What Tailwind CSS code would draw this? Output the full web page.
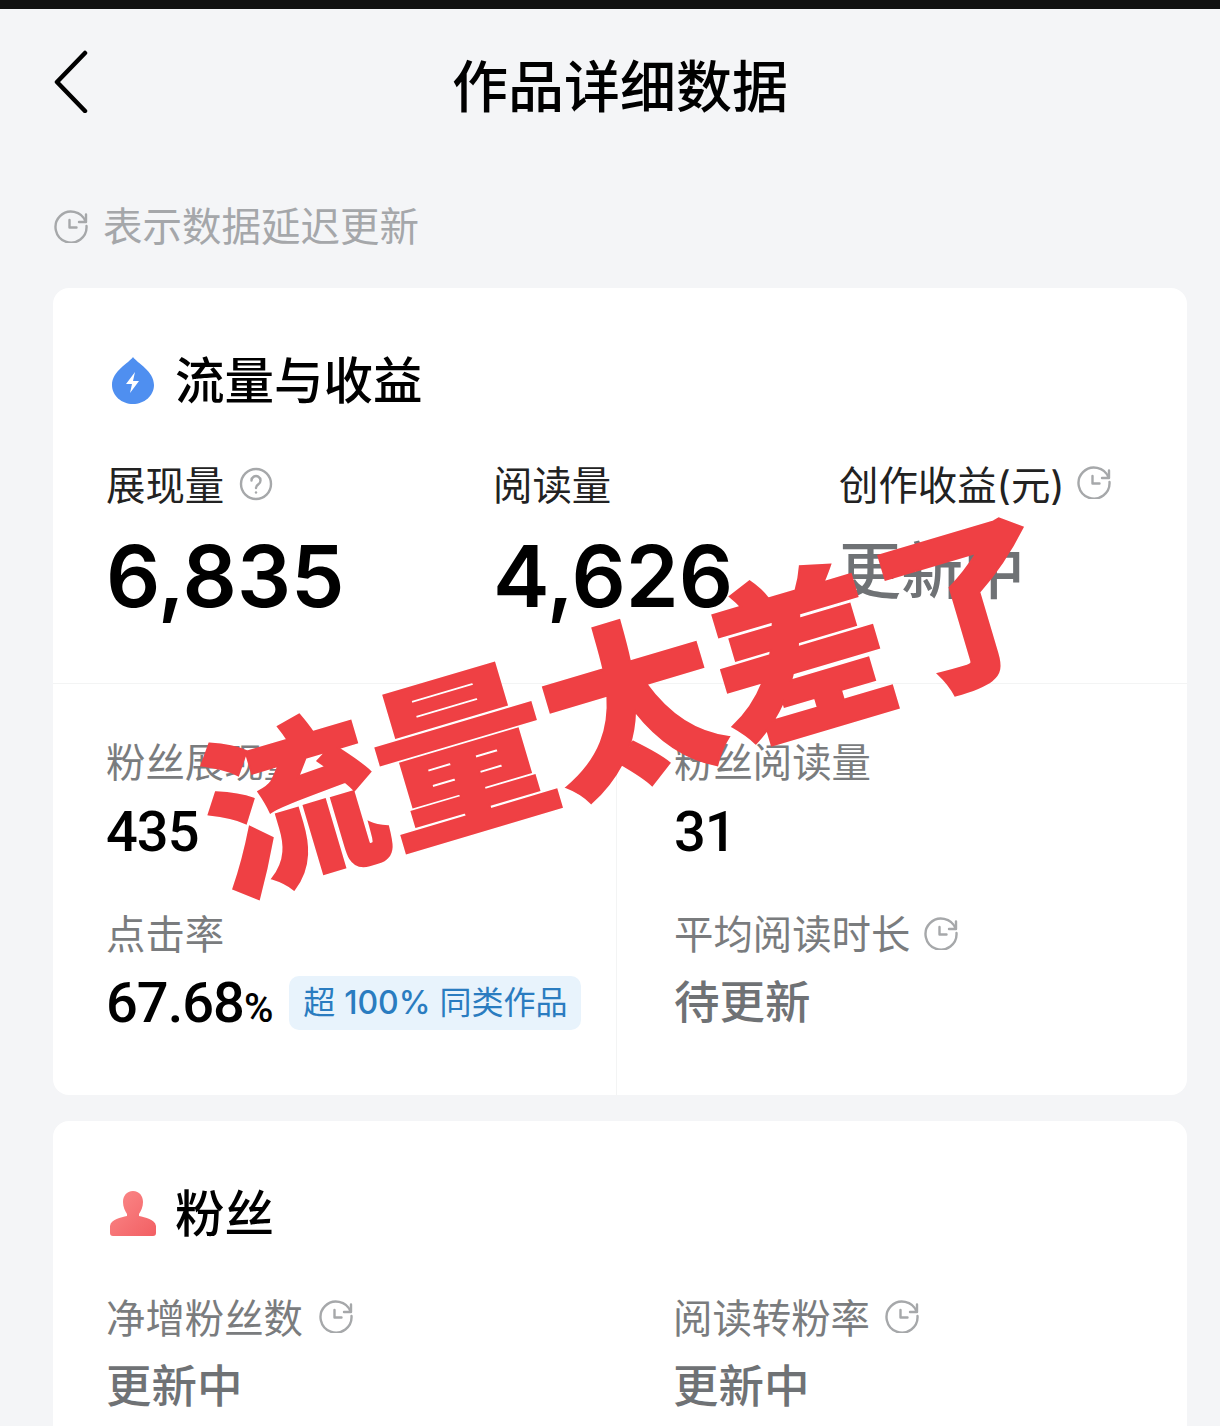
<!DOCTYPE html>
<html lang="zh-CN">
<head>
    <meta charset="UTF-8">
    <title>作品详细数据</title>
    <script src="https://cdn.jsdelivr.net/npm/@tailwindcss/browser@4"></script>
</head>
<body class="relative w-[1220px] h-[1426px] overflow-hidden bg-[#f4f5f7] font-['Inter','Noto_Sans_CJK_SC',sans-serif] text-black">
    <svg class="hidden">
        <symbol id="clock" viewBox="0 0 34 34" fill="none" stroke="#a6a8aa" stroke-width="2.4" stroke-linecap="round" stroke-linejoin="round">
            <path d="M31.5 12.5A15.5 15.5 0 1 0 32.5 17"/>
            <path d="M32 5.5v7.5h-7"/>
            <path d="M15.5 11v7.5h7"/>
        </symbol>
    </svg>

    <div class="h-[9px] bg-[#111111]"></div>

    <!-- 顶部标题 -->
    <header class="relative h-[154px] flex items-center justify-center pl-[53px] pr-[33px]">
        <svg class="absolute left-[53px] top-[41px] w-[37px] h-[63px]" viewBox="0 0 37 63" fill="none" stroke="#000" stroke-width="4.5" stroke-linecap="round" stroke-linejoin="round">
            <path d="M32 3 4 32l28 29"/>
        </svg>
        <h1 class="text-[56px] leading-[64px] font-medium pt-[2px]">作品详细数据</h1>
    </header>

    <div class="mt-[43px] ml-[54px] h-[40px] flex items-center gap-[15px] text-[39.5px] leading-[40px] text-[#a5a7aa]">
        <svg class="w-[34px] h-[34px]"><use href="#clock"/></svg>
        <span class="pt-[2px]">表示数据延迟更新</span>
    </div>

    <div class="ml-[53px] mr-[33px] mt-[42px] flex flex-col gap-[26px]">
        <!-- 流量与收益 -->
        <section class="bg-white rounded-[16px] h-[807px] flex flex-col">
            <div class="h-[396px] border-b border-[#f3f4f4] pt-[69px]">
                <div class="h-[48px] flex items-center pl-[57px] gap-[19px]">
                    <svg class="w-[46px] h-[48px]" viewBox="0 0 46 48">
                        <path d="M23 0C27 6 44 14 44 28 44 39 34 47 23 47 12 47 2 39 2 28 2 14 19 6 23 0Z" fill="#4f8ff0"/>
                        <path d="M25 15 16 27h6l-2 9 9-12h-6z" fill="#fff"/>
                    </svg>
                    <h2 class="text-[49.500px] leading-[48px] font-medium">流量与收益</h2>
                </div>
                <div class="mt-[61px] flex pl-[53px]">
                    <div class="w-[387px]">
                        <div class="h-[40px] flex items-center gap-[15px] text-[39.400px] leading-[40px] text-[#222]">
                            <span>展现量</span>
                            <svg class="w-[34px] h-[34px] -mt-[4px]" viewBox="0 0 34 34" fill="none" stroke="#a6a8aa" stroke-width="2.4" stroke-linecap="round">
                                <circle cx="17" cy="17" r="15"/>
                                <path d="M12.5 13.5a4.5 4.5 0 1 1 6.8 3.9c-1.500.9-2.300 1.800-2.300 3.600"/>
                                <path d="M17 25.500v.1"/>
                            </svg>
                        </div>
                        <div class="mt-[29px] h-[84px] text-[85px] leading-[84px] font-semibold">6,835</div>
                    </div>
                    <div class="w-[346px]">
                        <div class="h-[40px] text-[39.400px] leading-[40px] text-[#222]">阅读量</div>
                        <div class="mt-[29px] h-[84px] text-[85px] leading-[84px] font-semibold">4,626</div>
                    </div>
                    <div>
                        <div class="h-[40px] flex items-center gap-[12px] text-[39.400px] leading-[40px] text-[#222]">
                            <span>创作收益(元)</span>
                            <svg class="w-[34px] h-[34px] -mt-[8px]"><use href="#clock"/></svg>
                        </div>
                        <div class="mt-[36px] h-[60px] text-[62px] leading-[60px] font-medium text-[#6f7275]">更新中</div>
                    </div>
                </div>
            </div>
            <div class="flex-1 grid grid-cols-[564px_1fr]">
                <div class="border-r border-[#f3f4f4] pl-[53px] pt-[59px]">
                    <div class="h-[40px] text-[39.400px] leading-[40px] text-[#7a7c7e]">粉丝展现量</div>
                    <div class="mt-[21px] h-[56px] font-['Roboto',sans-serif] text-[56px] leading-[56px] font-medium tracking-[-1px]">435</div>
                    <div class="mt-[55px] h-[40px] text-[39.400px] leading-[40px] text-[#7a7c7e]">点击率</div>
                    <div class="mt-[21px] h-[54px] flex items-center">
                        <span class="pt-[5px] font-['Roboto',sans-serif] text-[56px] leading-[56px] font-medium tracking-[-1px]">67.68<span class="text-[40px]">%</span></span>
                        <span class="ml-[17px] h-[54px] w-[292px] rounded-[10px] bg-[#e8f3fc] flex items-center justify-center text-[32px] text-[#2a7cc0]">超&nbsp;<span class="font-medium">100%</span>&nbsp;同类作品</span>
                    </div>
                </div>
                <div class="pl-[57px] pt-[59px]">
                    <div class="h-[40px] text-[39.400px] leading-[40px] text-[#7a7c7e]">粉丝阅读量</div>
                    <div class="mt-[21px] h-[56px] font-['Roboto',sans-serif] text-[56px] leading-[56px] font-medium tracking-[-1px]">31</div>
                    <div class="mt-[55px] h-[40px] flex items-center gap-[14px] text-[39.400px] leading-[40px] text-[#7a7c7e]">
                        <span>平均阅读时长</span>
                        <svg class="w-[34px] h-[34px] -mt-[4px]"><use href="#clock"/></svg>
                    </div>
                    <div class="mt-[21px] h-[54px] text-[45.500px] leading-[54px] font-medium text-[#6f7275]">待更新</div>
                </div>
            </div>
        </section>

        <!-- 粉丝 -->
        <section class="bg-white rounded-[16px] h-[340px] pt-[69px]">
            <div class="h-[48px] flex items-center pl-[56px] gap-[18px]">
                <svg class="w-[48px] h-[48px]" viewBox="0 0 48 48">
                    <defs>
                        <linearGradient id="fans" x1="0" y1="0" x2="1" y2="1">
                            <stop offset="0" stop-color="#fb8a8a"/>
                            <stop offset="1" stop-color="#f25f63"/>
                        </linearGradient>
                    </defs>
                    <path d="M24 1c6.500 0 10 5 10 11 0 5-2 9-4 12v2c6 1.500 16 3 17 10v7c0 2-1 3-3 3H4c-2 0-3-1-3-3v-7c1-7 11-8.500 17-10v-2c-2-3-4-7-4-12 0-6 3.500-11 10-11Z" fill="url(#fans)"/>
                </svg>
                <h2 class="text-[49.500px] leading-[48px] font-medium">粉丝</h2>
            </div>
            <div class="mt-[61px] grid grid-cols-[564px_1fr]">
                <div class="pl-[53px]">
                    <div class="h-[40px] flex items-center gap-[16px] text-[39.400px] leading-[40px] text-[#7a7c7e]">
                        <span>净增粉丝数</span>
                        <svg class="w-[34px] h-[34px] -mt-[6px]"><use href="#clock"/></svg>
                    </div>
                    <div class="mt-[21px] h-[54px] text-[45.500px] leading-[54px] font-medium text-[#6f7275]">更新中</div>
                </div>
                <div class="pl-[56px]">
                    <div class="h-[40px] flex items-center gap-[15px] text-[39.400px] leading-[40px] text-[#7a7c7e]">
                        <span>阅读转粉率</span>
                        <svg class="w-[34px] h-[34px] -mt-[6px]"><use href="#clock"/></svg>
                    </div>
                    <div class="mt-[21px] h-[54px] text-[45.500px] leading-[54px] font-medium text-[#6f7275]">更新中</div>
                </div>
            </div>
        </section>
    </div>

    <!-- 盖章文字 -->
    <div class="absolute left-[631px] top-[707px] -translate-x-1/2 -translate-y-1/2 rotate-[-16.5deg] whitespace-nowrap text-[176px] leading-[176px] font-black text-[#ef4044] [-webkit-text-stroke:2px_#ef4044]">流量太差了</div>
</body>
</html>
